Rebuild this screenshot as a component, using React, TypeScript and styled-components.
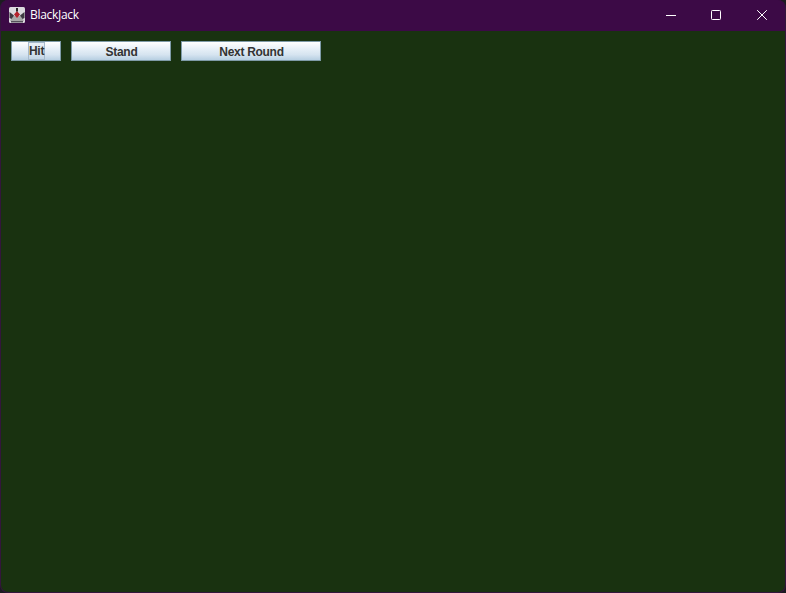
import React from "react";
import styled, { createGlobalStyle } from "styled-components";

const Global = createGlobalStyle`
  html, body { margin: 0; padding: 0; background: #1c1c20; }
  #root { width: 786px; height: 593px; overflow: hidden; }
`;

const Win = styled.div`
  width: 786px;
  height: 593px;
  box-sizing: border-box;
  display: flex;
  flex-direction: column;
  background: #3c0a46;
  border: 1px solid #33163c;
  border-top: 0;
  border-radius: 8px;
  overflow: hidden;
`;

const TitleBar = styled.div`
  height: 31px;
  box-sizing: border-box;
  flex: none;
  display: flex;
  align-items: center;
  background: #3c0a46;
  padding: 0 0 1px 8px;
`;

const AppIcon = styled.svg`
  width: 16px;
  height: 16px;
  flex: none;
`;

const Title = styled.span`
  margin-left: 5px;
  padding-bottom: 1px;
  font: 12px "Open Sans", "Noto Sans", sans-serif;
  letter-spacing: -0.3px;
  color: #ffffff;
  flex: 1;
`;

const WinControls = styled.div`
  display: flex;
  height: 30px;
`;

const WinButton = styled.div<{ $w: number }>`
  width: ${(p) => p.$w}px;
  height: 30px;
  box-sizing: border-box;
  padding-left: 17px;
  display: flex;
  align-items: center;
  svg { display: block; }
`;

const Content = styled.div`
  flex: 1;
  background: #193210;
  padding: 10px;
  display: flex;
  align-items: flex-start;
  gap: 10px;
`;

const GameButton = styled.button<{ $w: number }>`
  width: ${(p) => p.$w}px;
  height: 20px;
  box-sizing: border-box;
  padding: 1px 0 0 1px;
  margin: 0;
  border: 1px solid #7f9ba8;
  border-radius: 0;
  background: linear-gradient(to bottom, #ffffff 0%, #e9f1f8 35%, #d6e4f0 70%, #b7cfe2 100%);
  font: bold 12px "Liberation Sans", Arial, sans-serif;
  letter-spacing: -0.3px;
  color: #333333;
  display: flex;
  align-items: center;
  justify-content: center;
`;

const FocusLabel = styled.span`
  box-sizing: border-box;
  border: 1px solid #a6bacb;
  line-height: 16px;
  height: 18px;
  margin-top: -1px;
  width: 17px;
  text-align: center;
  background: rgba(200, 215, 230, 0.35);
`;

export default function App() {
  return (
    <>
      <Global />
      <Win>
        <TitleBar>
          <AppIcon viewBox="0 0 16 16">
            <rect x="0" y="0" width="16" height="16" rx="1.5" fill="#dcdadf" />
            <path d="M1 14 L4 9 L12 9 L15 14 Z" fill="#a8a8a8" />
            <path d="M0.5 5 L5 8.5 L2.5 12 L0.5 11 Z" fill="#3e3a42" />
            <path d="M15.5 5 L11 8.5 L13.5 12 L15.5 11 Z" fill="#3e3a42" />
            <path d="M8 4 L11 7.5 L8 11 L5 7.5 Z" fill="#b5222c" />
            <path d="M7 1 h2 v3.5 h-2 Z" fill="#2a2a2a" />
            <path d="M2 14 h12 v1.5 h-12 Z" fill="#55525a" />
          </AppIcon>
          <Title>BlackJack</Title>
          <WinControls>
            <WinButton $w={45}>
              <svg width="10" height="10" viewBox="0 0 10 10">
                <path d="M0 5.5 H10" stroke="#fff" strokeWidth="1" />
              </svg>
            </WinButton>
            <WinButton $w={46}>
              <svg width="10" height="10" viewBox="0 0 10 10">
                <rect x="0.5" y="0.5" width="9" height="9" rx="0.8" fill="none" stroke="#fff" strokeWidth="1" />
              </svg>
            </WinButton>
            <WinButton $w={45}>
              <svg width="10" height="10" viewBox="0 0 10 10">
                <path d="M0.2 0.2 L9.8 9.8 M9.8 0.2 L0.2 9.8" stroke="#fff" strokeWidth="1" />
              </svg>
            </WinButton>
          </WinControls>
        </TitleBar>
        <Content>
          <GameButton $w={50}>
            <FocusLabel>Hit</FocusLabel>
          </GameButton>
          <GameButton $w={100}>Stand</GameButton>
          <GameButton $w={140}>Next Round</GameButton>
        </Content>
      </Win>
    </>
  );
}
